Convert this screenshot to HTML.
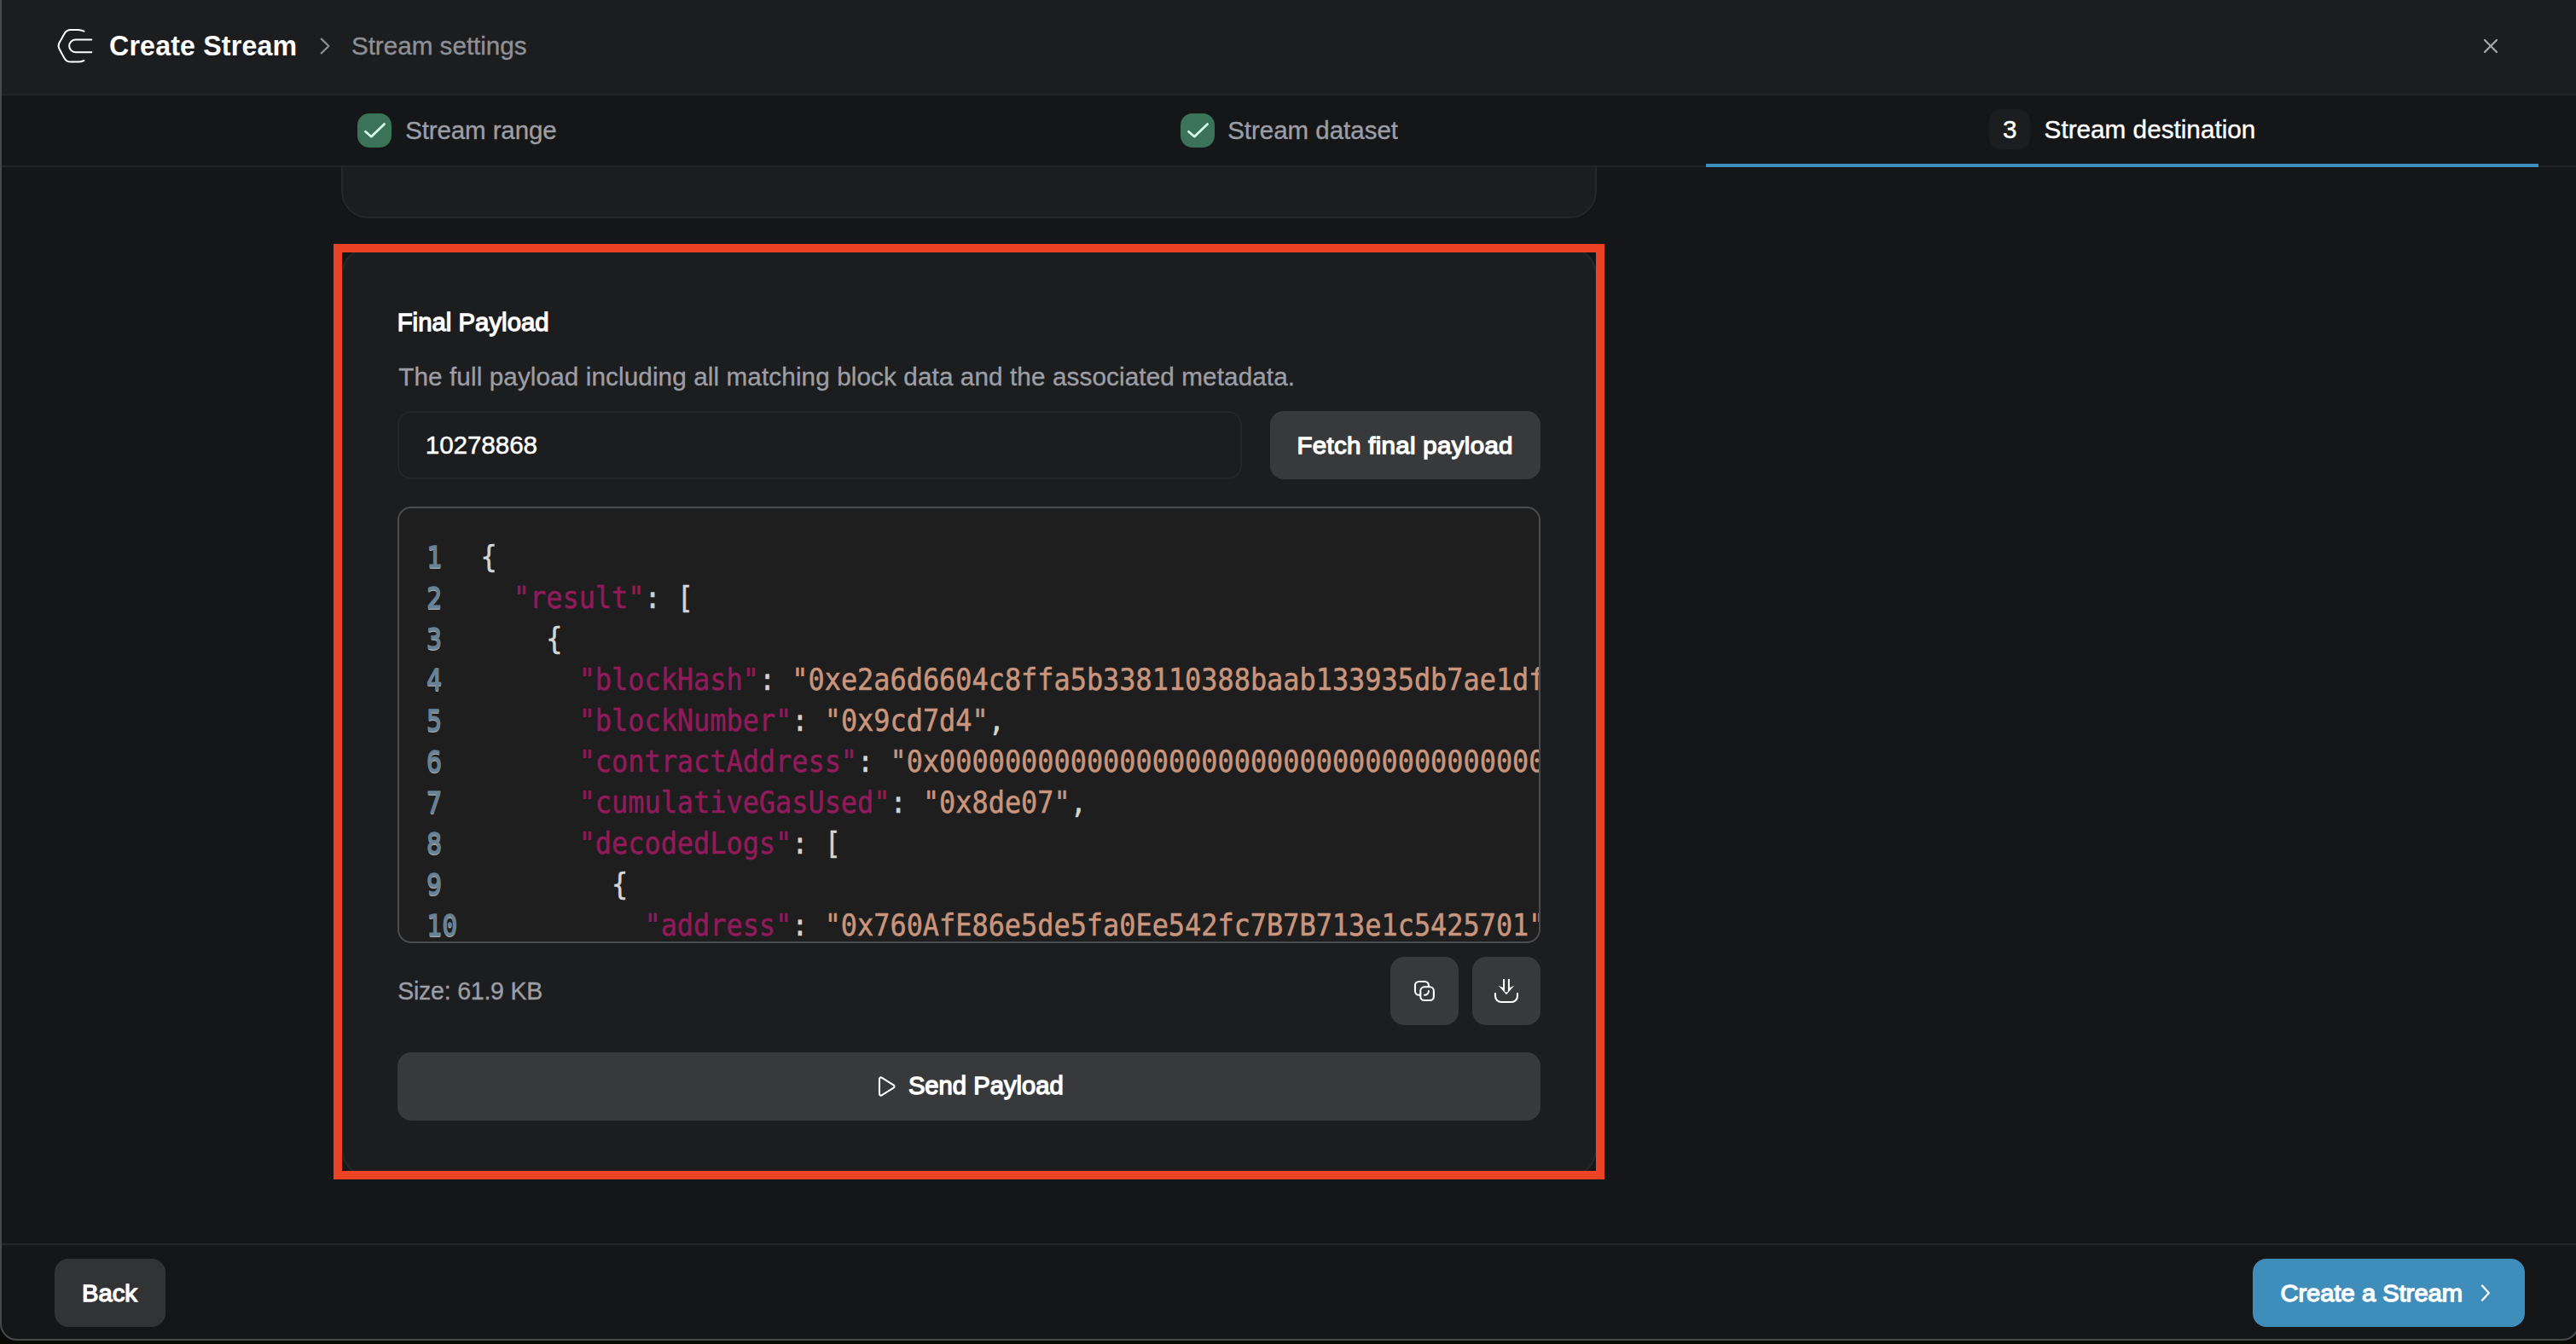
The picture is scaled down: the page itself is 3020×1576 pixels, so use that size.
<!DOCTYPE html>
<html lang="en">
<head>
<meta charset="utf-8">
<title>Create Stream</title>
<style>
html,body{margin:0;padding:0}
html{overflow:hidden;background:#151618}
body{width:3020px;height:1576px;position:relative;overflow:hidden;background:#151618;font-family:"Liberation Sans", sans-serif;}
#root{position:absolute;left:0;top:0;width:3020px;height:1576px;overflow:hidden;overflow:clip;background:#151618}
.a{position:absolute;box-sizing:border-box}
.t{position:absolute;white-space:nowrap;line-height:1;z-index:20;transform-origin:0 0.8465em}
#header{left:0;top:0;width:3020px;height:112px;background:#1c1d1f;border-bottom:2px solid #222627;z-index:5}
#steps{left:0;top:112px;width:3020px;height:84px;background:#151618;border-bottom:2px solid #212526;z-index:4}
#prev{left:400px;top:120px;width:1472px;height:136px;background:#1c1d1f;border:2px solid #252729;border-radius:32px;z-index:1}
#card{left:400px;top:290px;width:1472px;height:1090px;background:#1c1d1f;border:2px solid #252729;border-radius:32px;z-index:1}
#red{left:391px;top:286px;width:1490px;height:1097px;border:10px solid #ec4225;z-index:30}
#input{left:466px;top:482px;width:990px;height:80px;border:2px solid #242628;border-radius:16px;background:#1c1d1f;z-index:2}
.btn{background:#38393b;border-radius:16px;z-index:2}
#fetch{left:1489px;top:482px;width:317px;height:80px}
#copy{left:1630px;top:1122px;width:80px;height:80px;border-radius:16px}
#dl{left:1726px;top:1122px;width:80px;height:80px;border-radius:16px}
#send{left:466px;top:1234px;width:1340px;height:80px}
#back{left:64px;top:1476px;width:130px;height:80px;background:#323335}
#create{left:2641px;top:1476px;width:319px;height:80px;background:#3f8dba;border-radius:16px}
#fdiv{left:0;top:1458px;width:3020px;height:2px;background:#222627;z-index:2}
.chk{width:40px;height:40px;top:133px;border-radius:14px;background:#3b7358;z-index:6}
#badge{left:2332px;top:128px;width:48px;height:47px;border-radius:14px;background:#1c1d1f;z-index:6;color:#fff;font-size:29px;line-height:47px;text-align:center}
#bar{left:2000px;top:192px;width:976px;height:4px;background:#3e8ec1;z-index:7}
#code{left:466px;top:594px;width:1340px;height:512px;border:2px solid #4b4c4d;border-radius:16px;background:#1e1e1e;overflow:hidden;z-index:2}
#lines{position:absolute;left:32px;top:32.5px;width:111.317%;transform:scaleX(0.89834);transform-origin:0 0;font-family:"DejaVu Sans Mono", "Liberation Mono", monospace;font-size:35.5px;line-height:48px;color:#d4d4d4;-webkit-text-stroke:0.55px}
.ln{height:48px;white-space:pre}
.ln b{display:inline-block;font-size:0.945em;width:2.106em;-webkit-text-stroke:1.3px;font-weight:normal;color:#678296;text-shadow:0 1.5px 0 #a9aaab}
.k{color:#911a5a}.s{color:#c9957c}.p{color:#d4d4d4}
#frame{left:0;top:-30px;width:3024px;height:1602px;border:2px solid #47494b;border-radius:20px;box-shadow:0 0 0 30px #0a0b07;z-index:50;pointer-events:none}
#icons{position:absolute;left:0;top:0;z-index:25;pointer-events:none}
</style>
</head>
<body>
<div id="root">
<div class="a" id="header"></div>
<div class="a" id="steps"></div>
<div class="a" id="prev"></div>
<div class="a" id="card"></div>
<div class="a" id="input"></div>
<div class="a btn" id="fetch"></div>
<div class="a" id="code"><div id="lines">
<div class="ln"><b>1</b><span class="p">{</span></div>
<div class="ln"><b>2</b><span class="p">  </span><span class="k">"result"</span><span class="p">: [</span></div>
<div class="ln"><b>3</b><span class="p">    {</span></div>
<div class="ln"><b>4</b><span class="p">      </span><span class="k">"blockHash"</span><span class="p">: </span><span class="s">"0xe2a6d6604c8ffa5b338110388baab133935db7ae1df4a7c2e9b6d05f3a81c7e2"</span><span class="p">,</span></div>
<div class="ln"><b>5</b><span class="p">      </span><span class="k">"blockNumber"</span><span class="p">: </span><span class="s">"0x9cd7d4"</span><span class="p">,</span></div>
<div class="ln"><b>6</b><span class="p">      </span><span class="k">"contractAddress"</span><span class="p">: </span><span class="s">"0x0000000000000000000000000000000000000000"</span><span class="p">,</span></div>
<div class="ln"><b>7</b><span class="p">      </span><span class="k">"cumulativeGasUsed"</span><span class="p">: </span><span class="s">"0x8de07"</span><span class="p">,</span></div>
<div class="ln"><b>8</b><span class="p">      </span><span class="k">"decodedLogs"</span><span class="p">: [</span></div>
<div class="ln"><b>9</b><span class="p">        {</span></div>
<div class="ln"><b>10</b><span class="p">          </span><span class="k">"address"</span><span class="p">: </span><span class="s">"0x760AfE86e5de5fa0Ee542fc7B7B713e1c5425701"</span><span class="p">,</span></div>
</div></div>
<div class="a btn" id="copy"></div>
<div class="a btn" id="dl"></div>
<div class="a btn" id="send"></div>
<div class="a" id="fdiv"></div>
<div class="a btn" id="back"></div>
<div class="a btn" id="create"></div>
<div class="a chk" style="left:419px"></div>
<div class="a chk" style="left:1384px"></div>
<div class="a" id="badge"></div>
<div class="a" id="bar"></div>
<div class="a" id="red"></div>
<span class="t" id="t_title" style="left:128.00px;top:38.14px;font-size:32.2px;font-weight:bold;color:#ffffff;letter-spacing:0.154px;transform:scaleY(1.0472);">Create Stream</span>
<span class="t" id="t_sub" style="left:411.88px;top:38.96px;font-size:29.7px;font-weight:normal;color:#8e9097;letter-spacing:-0.032px;transform:scaleY(0.9910);-webkit-text-stroke:0.35px #8e9097;">Stream settings</span>
<span class="t" id="t_s1" style="left:475.18px;top:138.43px;font-size:29.5px;font-weight:normal;color:#9c9ea5;letter-spacing:-0.116px;transform:scaleY(1.0125);-webkit-text-stroke:0.35px #9c9ea5;">Stream range</span>
<span class="t" id="t_s2" style="left:1439.17px;top:138.43px;font-size:29.5px;font-weight:normal;color:#9c9ea5;letter-spacing:-0.015px;transform:scaleY(1.0125);-webkit-text-stroke:0.35px #9c9ea5;">Stream dataset</span>
<span class="t" id="t_s3n" style="left:2347.90px;top:137.26px;font-size:29.7px;font-weight:normal;color:#ffffff;letter-spacing:0.000px;transform:scaleY(1.0032);-webkit-text-stroke:0.4px #ffffff;">3</span>
<span class="t" id="t_s3" style="left:2396.60px;top:137.26px;font-size:29.7px;font-weight:normal;color:#ffffff;letter-spacing:0.011px;transform:scaleY(1.0032);-webkit-text-stroke:0.4px #ffffff;">Stream destination</span>
<span class="t" id="t_h" style="left:465.65px;top:363.40px;font-size:29.3px;font-weight:normal;color:#ffffff;letter-spacing:0.040px;transform:scaleY(0.9971);-webkit-text-stroke:1.3px #ffffff;">Final Payload</span>
<span class="t" id="t_desc" style="left:467.18px;top:426.96px;font-size:29.7px;font-weight:normal;color:#9c9ea5;letter-spacing:0.101px;transform:scaleY(1.0008);-webkit-text-stroke:0.35px #9c9ea5;">The full payload including all matching block data and the associated metadata.</span>
<span class="t" id="t_in" style="left:498.83px;top:507.16px;font-size:29.7px;font-weight:normal;color:#ffffff;letter-spacing:-0.125px;transform:scaleY(1.0008);-webkit-text-stroke:0.45px #ffffff;">10278868</span>
<span class="t" id="t_fetch" style="left:1520.38px;top:506.63px;font-size:29.5px;font-weight:normal;color:#ffffff;letter-spacing:0.307px;transform:scaleY(0.9534);-webkit-text-stroke:1.35px #ffffff;">Fetch final payload</span>
<span class="t" id="t_size" style="left:466.18px;top:1147.67px;font-size:28.5px;font-weight:normal;color:#9c9ea5;letter-spacing:-0.219px;transform:scaleY(1.0327);-webkit-text-stroke:0.35px #9c9ea5;">Size: 61.9 KB</span>
<span class="t" id="t_send" style="left:1064.88px;top:1258.88px;font-size:29.2px;font-weight:normal;color:#ffffff;letter-spacing:0.012px;transform:scaleY(0.9781);-webkit-text-stroke:1.35px #ffffff;">Send Payload</span>
<span class="t" id="t_back" style="left:96.08px;top:1502.08px;font-size:29.2px;font-weight:normal;color:#ffffff;letter-spacing:-0.015px;transform:scaleY(0.9731);-webkit-text-stroke:1.35px #ffffff;">Back</span>
<span class="t" id="t_create" style="left:2673.38px;top:1501.88px;font-size:29.2px;font-weight:normal;color:#ffffff;letter-spacing:-0.026px;transform:scaleY(0.9731);-webkit-text-stroke:1.35px #ffffff;">Create a Stream</span>
<svg id="icons" width="3020" height="1576" viewBox="0 0 3020 1576" fill="none" stroke-linecap="round" stroke-linejoin="round">
<!-- logo -->
<g stroke="#ffffff" stroke-width="2">
<path d="M98.5 36.6 C96 35.4 94 35 91.5 35 H83 C79.5 35 77.2 36.4 75.5 39.4 L69.6 50 C68.4 52.3 68.4 55.2 69.6 57.5 L75.5 68.2 C77.2 71.2 79.5 72.6 83 72.6 H91.5 C94 72.6 96 72.2 98.5 71"/>
<path d="M107.3 46.6 H88.5 A7.3 7.3 0 0 0 88.5 61.2 H107.3"/>
</g>
<!-- breadcrumb chevron -->
<path d="M376.8 45.6 L385.4 54 L376.8 62.4" stroke="#8b8d93" stroke-width="2.2"/>
<!-- close -->
<path d="M2913 47 L2927 61 M2927 47 L2913 61" stroke="#a3a5aa" stroke-width="2.3"/>
<!-- step checks -->
<path d="M428.4 154.3 L435.3 160.3 L450.6 145.5" stroke="#d3fde6" stroke-width="2.8"/>
<path d="M1393.4 154.3 L1400.3 160.3 L1415.6 145.5" stroke="#d3fde6" stroke-width="2.8"/>
<!-- copy icon -->
<g stroke="#ffffff" stroke-width="2.1">
<rect x="1659" y="1151" width="15.9" height="15.8" rx="4.6"/>
<rect x="1665.3" y="1157.3" width="15.6" height="15.7" rx="4.6" fill="#38393b"/>
<path d="M1674.9 1161.9 V1162.2 A4.6 4.6 0 0 1 1670.3 1166.8 H1670" stroke-width="2"/>
</g>
<!-- download icon -->
<path d="M1753 1165 V1168 A7 7 0 0 0 1760 1175 H1772 A7 7 0 0 0 1779 1168 V1165" stroke="#ffffff" stroke-width="2.1"/>
<path d="M1762.1 1148 H1764.1 V1162.4 L1766 1163.8 L1767.9 1162.4 V1148 H1769.9 V1157.9 Q1772.8 1156.9 1775.5 1155.4 L1766 1166.3 L1756.5 1155.4 Q1759.2 1156.9 1762.1 1157.9 Z" fill="#ffffff" stroke="none"/>
<!-- play icon -->
<path d="M1031 1265.2 C1031 1263.8 1032.4 1263 1033.6 1263.7 L1047.6 1272.4 C1048.8 1273.1 1048.8 1274.9 1047.6 1275.6 L1033.6 1284.3 C1032.4 1285 1031 1284.2 1031 1282.8 Z" stroke="#ffffff" stroke-width="2.1"/>
<!-- create chevron -->
<path d="M2910 1507.6 L2917.8 1516.2 L2910 1524.8" stroke="#ffffff" stroke-width="2.2"/>
</svg>
<div class="a" id="frame"></div>
</div>
</body>
</html>
